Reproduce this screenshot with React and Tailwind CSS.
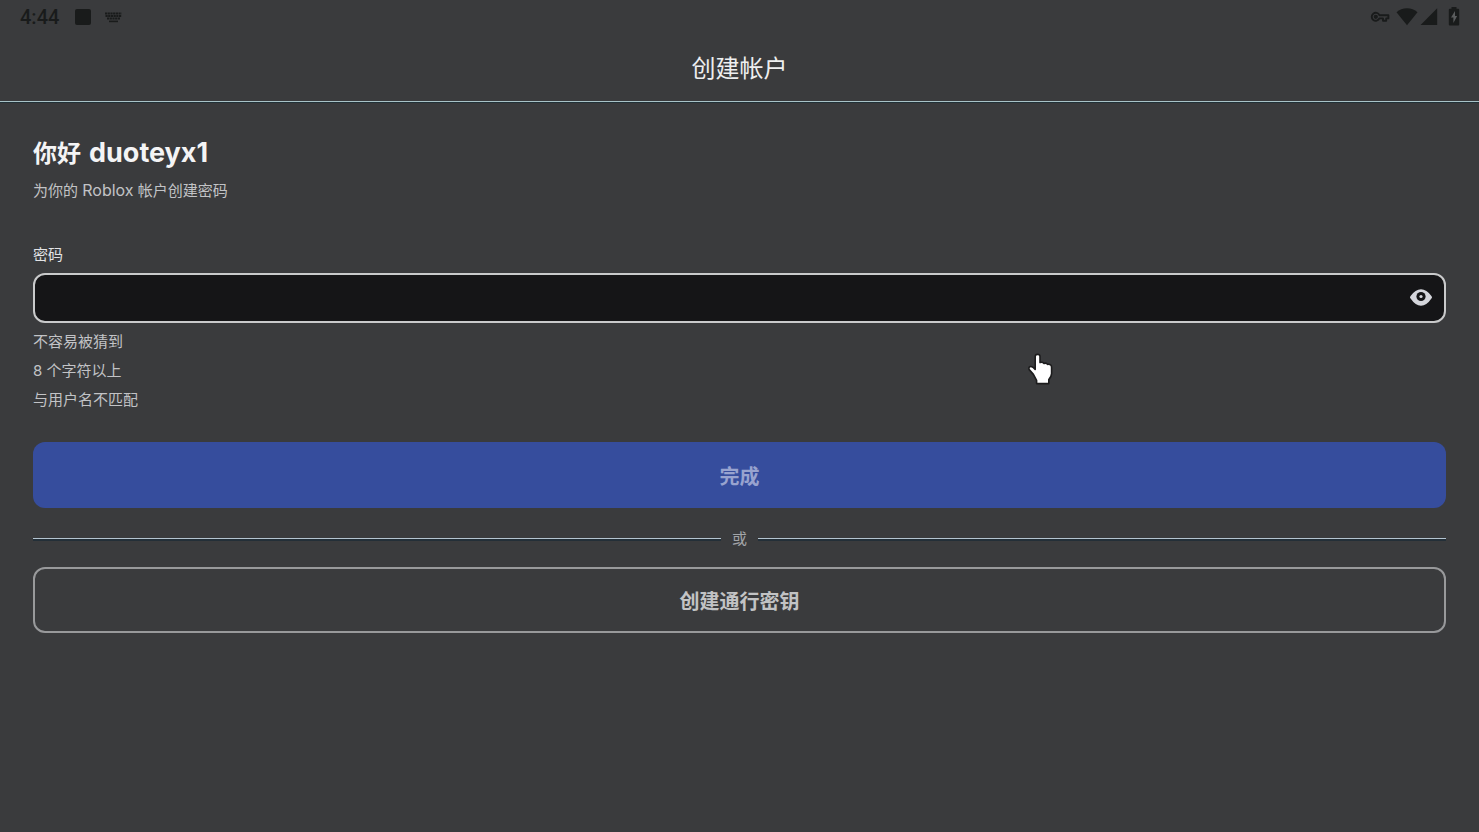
import React, { useState } from 'react';

const hints = ['不容易被猜到', '8 个字符以上', '与用户名不匹配'];

const StatusBar = () => (
  <div className="flex h-[34px] items-center justify-between pr-[19px] pl-5 text-[#191b1b]">
    <div className="flex items-center">
      <span className="font-['Roboto',sans-serif] text-[20px] leading-6 font-medium">4:44</span>
      <span className="ml-4 h-4 w-4 rounded-xs bg-[#191b1b]" />
      <svg className="ml-3 h-5 w-5" viewBox="0 0 20 20" fill="none" stroke="currentColor">
        <path d="M2 6.5h16.5M2.5 9h16M4 11.5h13" strokeWidth="2" strokeDasharray="2.2 .5" />
        <path d="M6 14.4h9" strokeWidth="1.6" />
      </svg>
    </div>
    <div className="flex items-center">
      <svg className="h-4 w-5" viewBox="0 0 20 16" fill="none" stroke="currentColor" strokeWidth="1.9">
        <path d="M9.4 6.2A4 4 0 1 0 9.4 9.4H13v2.4h3.2V9.4h2.2V6.2Z" strokeLinejoin="round" />
        <circle cx="5.8" cy="7.8" r="1.2" fill="currentColor" />
      </svg>
      <svg className="ml-1.5 h-[18px] w-[22px]" viewBox="0 0 22 18" fill="currentColor">
        <path d="M11 17.2.5 4.2Q4.8.2 11 .2t10.5 4Z" />
      </svg>
      <svg className="ml-0.5 h-[18px] w-[18px]" viewBox="0 0 18 18" fill="currentColor">
        <path d="M17.2.2V17H.6Z" />
      </svg>
      <svg className="ml-2.5 h-5 w-3" viewBox="0 0 12 20">
        <path
          d="M3.5 0h5v1.8h1.7q1 0 1 1v14.6q0 1-1 1H1.8q-1 0-1-1V2.8q0-1 1-1h1.7Z"
          fill="currentColor"
        />
        <path d="M7 4 3 10.6h2.4v5.4L9.1 9H7Z" fill="#5a5c5d" />
      </svg>
    </div>
  </div>
);

const Divider = () => (
  <span className="h-[3px] flex-1 border-t border-[#b4c4d0] bg-[#232f38]" />
);

const App = () => {
  const [password, setPassword] = useState('');
  const [visible, setVisible] = useState(false);

  return (
    <div className="min-h-screen bg-[#3a3b3d] font-['Inter','Noto_Sans_CJK_SC',sans-serif] text-[#c2c3c6]">
      <StatusBar />

      <header className="flex h-[67px] items-center justify-center pt-0.5">
        <h1 className="text-[24px] leading-8 text-[#eeeff0]">创建帐户</h1>
      </header>
      <div className="h-0.5 border-t border-[#a9c3c8] bg-[#203036]" />

      <main className="px-[33px] pt-8">
        <h2 className="flex items-baseline gap-2 text-[24px] leading-9 font-bold text-[#f4f4f5]">
          <span>你好</span>
          <span className="text-[27px]">duoteyx1</span>
        </h2>
        <p className="mt-1.5 text-[15px] leading-6">
          为你的 <span className="text-[16px]">Roblox</span> 帐户创建密码
        </p>

        <form onSubmit={(e) => e.preventDefault()}>
          <label htmlFor="password" className="mt-10 block text-[15px] leading-6 text-[#e2e3e5]">
            密码
          </label>
          <div className="relative mt-1.5">
            <input
              id="password"
              type={visible ? 'text' : 'password'}
              value={password}
              onChange={(e) => setPassword(e.target.value)}
              className="block h-[50px] w-full rounded-xl border-2 border-[#c9cacb] bg-[#151517] pr-14 pl-4 text-[15px] text-white outline-none"
            />
            <button
              type="button"
              aria-label="显示密码"
              onClick={() => setVisible(!visible)}
              className="absolute inset-y-0 right-[13px] flex items-center"
            >
              <svg className="h-6 w-6" viewBox="0 0 24 24">
                <path
                  d="M1 11.5Q1 10.8 1.6 10.1Q6.4 3.3 12 3.3T22.4 10.1Q23 10.8 23 11.5T22.4 12.5Q17.6 19.7 12 19.7T1.6 12.5Q1 12 1 11.5Z"
                  fill="#d5d6dc"
                />
                <circle cx="12" cy="10.5" r="4.6" fill="#151517" />
                <circle cx="12" cy="10.5" r="1.6" fill="#d5d6dc" />
              </svg>
            </button>
          </div>

          <ul className="mt-1 text-[15px] leading-[29px]">
            {hints.map((hint) => (
              <li key={hint}>{hint}</li>
            ))}
          </ul>

          <button
            type="submit"
            className="mt-7 block h-[66px] w-full rounded-xl bg-[#364d9d] pt-1 text-[20px] font-bold text-[#98a3cf]"
          >
            完成
          </button>

          <div className="mt-5 mb-[17px] flex h-[22px] items-center gap-[11px]">
            <Divider />
            <span className="text-[15px] leading-6 text-[#a2a4a8]">或</span>
            <Divider />
          </div>

          <button
            type="button"
            className="block h-[66px] w-full rounded-xl border-2 border-[#98999b] pt-1 text-[20px] font-bold text-[#c2c3c4]"
          >
            创建通行密钥
          </button>
        </form>
      </main>

      {/* pointer */}
      <svg
        className="pointer-events-none absolute top-[352px] left-[1026px] h-9 w-7"
        viewBox="0 0 28 36"
        fill="#fff"
        stroke="#1c1c1d"
        strokeWidth="1.6"
        strokeLinejoin="round"
      >
        <path d="M9.2 4.6Q9.2 2.4 11.6 2.4T14 4.6V10.6Q16.4 9.6 18 11.4Q20.3 10.4 21.6 12.4Q25.6 11.8 25.6 15.6V21.6Q25.4 24.8 22.8 27.6V31.6H10.6V28.4L7.4 22.4L3.2 17.6Q2.2 15.2 4.4 14.6Q6.6 14.2 9.2 17.4Z" />
      </svg>
    </div>
  );
};

export default App;
